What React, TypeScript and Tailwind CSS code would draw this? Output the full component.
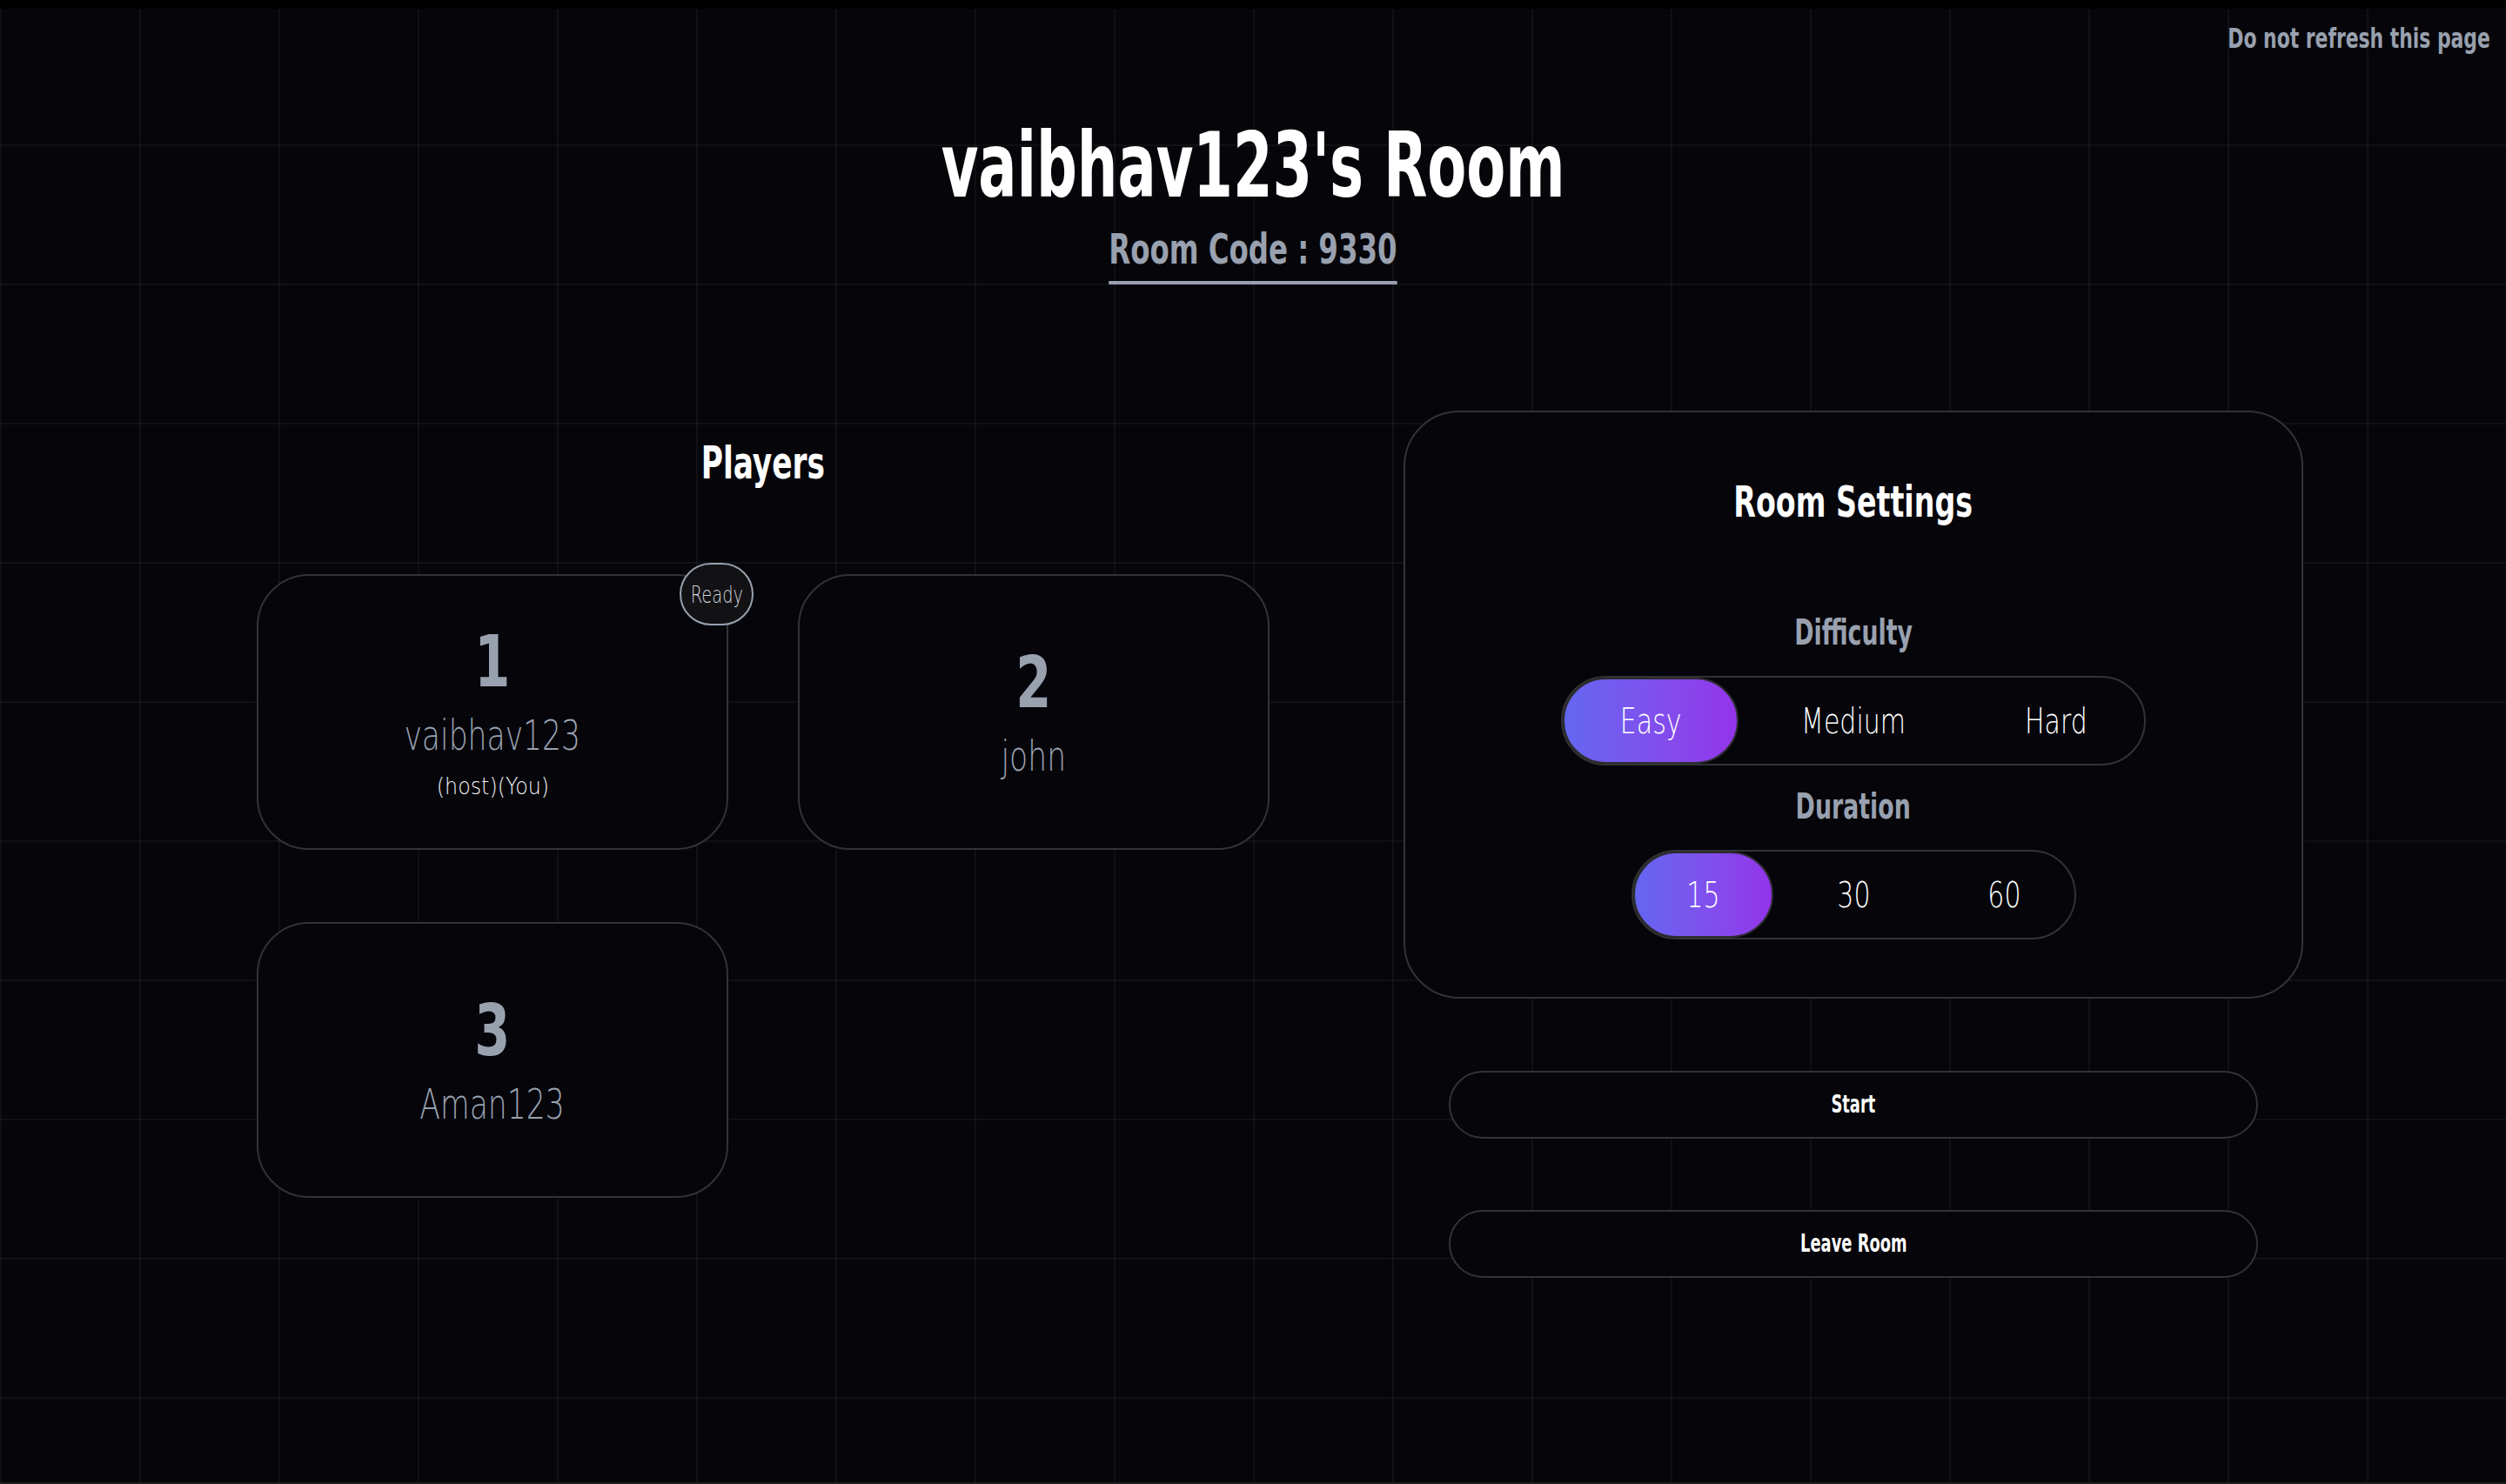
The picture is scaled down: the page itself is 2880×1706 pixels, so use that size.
const cond = "font-[family-name:'DejaVu_Sans_Condensed','DejaVu_Sans',sans-serif]";
const thin = "font-[family-name:'DejaVu_Sans',sans-serif] font-extralight";

type Player = { id: number; name: string; tag?: string; ready?: boolean };

const players: Player[] = [
  { id: 1, name: "vaibhav123", tag: "(host)(You)", ready: true },
  { id: 2, name: "john" },
  { id: 3, name: "Aman123" },
];

function PlayerCard({ p }: { p: Player }) {
  return (
    <div className="relative h-[317px] rounded-[60px] border-2 border-[#333336] bg-[#05050a] flex flex-col items-center justify-center">
      {p.ready && (
        <div className="absolute -top-[15px] -right-[31px] w-[85px] h-[72px] rounded-full border-2 border-gray-400 bg-[#121214] flex items-center justify-center">
          <span className={`${thin} inline-block scale-x-[0.72] text-[27px] leading-none text-gray-300`}>Ready</span>
        </div>
      )}
      <span className={`${cond} scale-x-[0.8] text-[82px] leading-none font-bold text-gray-400`}>{p.id}</span>
      <span className={`${thin} mt-[19px] scale-x-[0.72] text-[48px] leading-none text-gray-400`}>{p.name}</span>
      {p.tag && (
        <span className={`${thin} mt-[21px] scale-x-[0.88] text-[27px] leading-none font-light text-gray-100`}>{p.tag}</span>
      )}
    </div>
  );
}

function Toggle({ options, value }: { options: { label: string; w: string }[]; value: string }) {
  return (
    <div className="flex gap-3 rounded-full border-2 border-[#333336]">
      {options.map((o) => (
        <button
          key={o.label}
          className={`${o.w} h-[99px] rounded-full border-2 flex items-center justify-center ${
            o.label === value
              ? "border-[#2e2e30] bg-linear-to-r from-[#6366f1] to-[#9333ea]"
              : "border-transparent"
          }`}
        >
          <span className={`${thin} inline-block scale-x-[0.75] text-[40px] leading-none text-white`}>{o.label}</span>
        </button>
      ))}
    </div>
  );
}

export default function App() {
  return (
    <div className={`h-screen flex flex-col bg-black ${cond}`}>
      <div className="h-[10px] bg-black" />
      <main className="flex-1 bg-[#06060a] bg-[linear-gradient(to_right,rgba(255,255,255,0.045)_2px,transparent_2px),linear-gradient(to_bottom,rgba(255,255,255,0.045)_2px,transparent_2px)] bg-[size:160px_160px] bg-[position:0_-4px]">
        <div className="flex justify-end pr-[18px] pt-[18px]">
          <span className="inline-block origin-right scale-x-[0.76] text-[32px] leading-none font-bold text-gray-400">
            Do not refresh this page
          </span>
        </div>

        {/* Header */}
        <div className="mt-[78px] flex flex-col items-center">
          <h1 className="scale-x-[0.7] text-[104px] leading-none font-bold text-white">vaibhav123's Room</h1>
          <div className="mt-[20px] scale-x-[0.75] border-b-4 border-gray-400 pb-[13px] text-[48px] leading-none font-bold text-gray-400">
            Room Code : 9330
          </div>
        </div>

        <section className="mt-[145px] flex items-start gap-[154px] pl-[295px]">
          {/* Players */}
          <div className="w-[1164px] pt-[35px] flex flex-col items-center">
            <h2 className="scale-x-[0.75] text-[51px] leading-none font-bold text-white">Players</h2>
            <div className="mt-[102px] w-full grid grid-cols-2 gap-x-[80px] gap-y-[83px]">
              {players.map((p) => (
                <PlayerCard key={p.id} p={p} />
              ))}
            </div>
          </div>

          {/* Settings */}
          <div className="w-[1034px] flex flex-col items-center">
            <div className="w-full rounded-[64px] border-2 border-[#333336] bg-[#05050a] pt-[78px] pb-[66px] flex flex-col items-center">
              <h2 className="scale-x-[0.74] text-[50px] leading-none font-bold text-white">Room Settings</h2>
              <span className="mt-[105px] scale-x-[0.745] text-[40px] leading-none font-bold text-gray-400">Difficulty</span>
              <div className="mt-[30px]">
                <Toggle
                  options={[
                    { label: "Easy", w: "w-[202px]" },
                    { label: "Medium", w: "w-[240px]" },
                    { label: "Hard", w: "w-[202px]" },
                  ]}
                  value="Easy"
                />
              </div>
              <span className="mt-[27px] scale-x-[0.745] text-[40px] leading-none font-bold text-gray-400">Duration</span>
              <div className="mt-[30px]">
                <Toggle
                  options={[
                    { label: "15", w: "w-[161px]" },
                    { label: "30", w: "w-[161px]" },
                    { label: "60", w: "w-[161px]" },
                  ]}
                  value="15"
                />
              </div>
            </div>

            <div className="mt-[83px] w-full flex flex-col items-center gap-[82px]">
              <button className="w-[90%] h-[78px] rounded-full border-2 border-[#333336] bg-[#05050a] flex items-center justify-center">
                <span className="inline-block scale-x-[0.71] text-[28px] leading-none font-bold text-white">Start</span>
              </button>
              <button className="w-[90%] h-[78px] rounded-full border-2 border-[#333336] bg-[#05050a] flex items-center justify-center">
                <span className="inline-block scale-x-[0.71] text-[28px] leading-none font-bold text-white">Leave Room</span>
              </button>
            </div>
          </div>
        </section>
      </main>
      <div className="h-[2px] bg-[#1c1c1a]" />
    </div>
  );
}
